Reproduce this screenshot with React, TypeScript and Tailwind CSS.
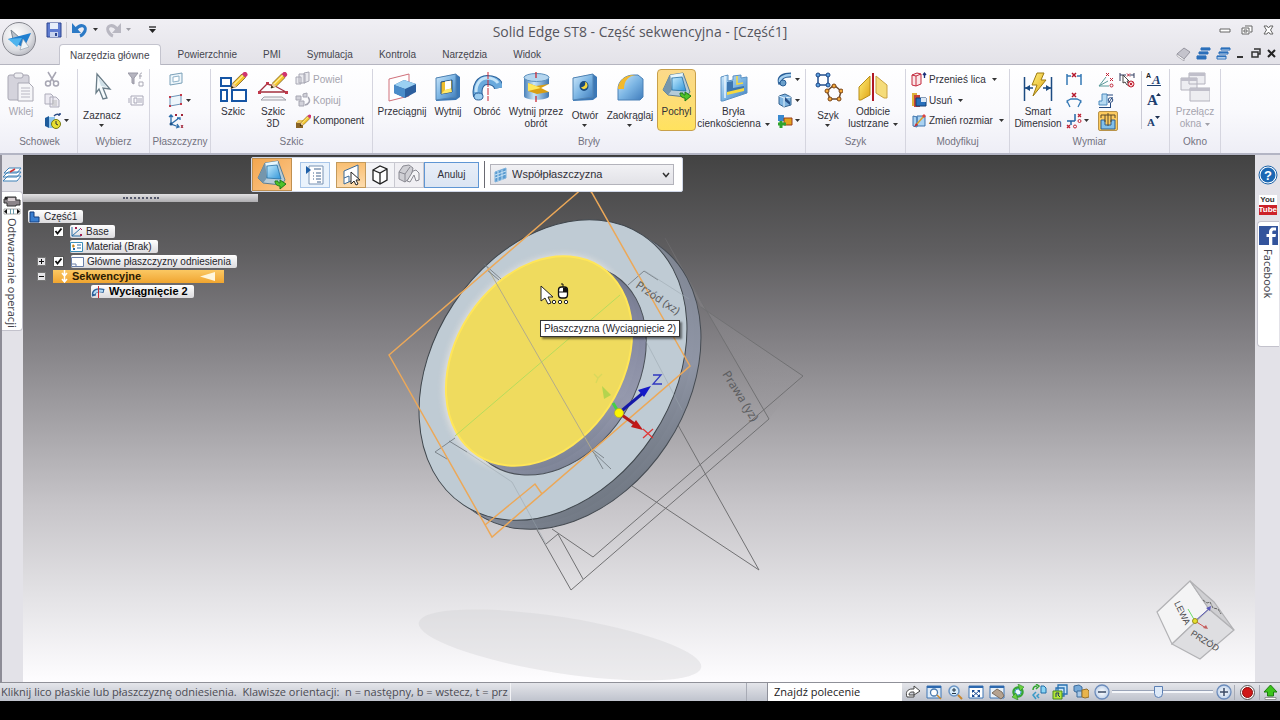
import React from "react";

type Kids = { children?: React.ReactNode };

const Ico = ({ s = 16, w, h, children }: { s?: number; w?: number; h?: number } & Kids) => (
  <svg width={w ?? s} height={h ?? s} viewBox={`0 0 ${w ?? s} ${h ?? s}`} fill="none" aria-hidden="true" className="shrink-0">
    {children}
  </svg>
);

const Caret = ({ dim = false }: { dim?: boolean }) => (
  <svg width="5" height="3" viewBox="0 0 5 3" aria-hidden="true" className="shrink-0">
    <path d="M0 0h5L2.5 3z" fill={dim ? "#a0a0a8" : "#333"} />
  </svg>
);

const Defs = () => (
  <svg width="0" height="0" className="absolute" aria-hidden="true">
    <defs>
      <linearGradient id="blue" x1="0" y1="0" x2="1" y2="1">
        <stop offset="0" stopColor="#cfe9fb" />
        <stop offset="0.5" stopColor="#7db6e4" />
        <stop offset="1" stopColor="#3f7cbc" />
      </linearGradient>
      <linearGradient id="sky" x1="0" y1="0" x2="1" y2="1">
        <stop offset="0" stopColor="#c4ecff" />
        <stop offset="1" stopColor="#2f94d8" />
      </linearGradient>
      <linearGradient id="gold" x1="0" y1="0" x2="1" y2="1">
        <stop offset="0" stopColor="#fff07a" />
        <stop offset="1" stopColor="#e0a416" />
      </linearGradient>
      <linearGradient id="cyl" x1="0" y1="0" x2="1" y2="0">
        <stop offset="0" stopColor="#4a80b8" />
        <stop offset="0.4" stopColor="#c9e6f8" />
        <stop offset="1" stopColor="#3f78b4" />
      </linearGradient>
      <radialGradient id="orb" cx="0.4" cy="0.35" r="0.7">
        <stop offset="0" stopColor="#ffffff" />
        <stop offset="0.7" stopColor="#dcdde2" />
        <stop offset="1" stopColor="#b5b6be" />
      </radialGradient>
      <radialGradient id="zoomknob">
        <stop offset="0" stopColor="#ffffff" />
        <stop offset="1" stopColor="#c0d2ea" />
      </radialGradient>
    </defs>
  </svg>
);

/* ---------- shared icon drawings ---------- */
const Pencil = ({ t = "" }: { t?: string }) => (
  <g transform={t}>
    <path d="M0 16l2-6L12 0l4 4L6 14z" fill="#f2c52e" stroke="#6a4a10" strokeWidth=".8" />
    <path d="M3.5 11.500L13.500 1.500" stroke="#fff3a0" strokeWidth="1.300" />
    <path d="M12 0l1.500-1.500a2.500 2.500 0 0 1 4 4L16 4z" fill="#d0356f" />
    <path d="M0 16l1-3 2 2z" fill="#111" />
    <path d="M1 13l1-3 4 4-3 1z" fill="#e8c9a0" />
  </g>
);

const DraftIcon = () => (
  <Ico s={30}>
    <path d="M8 3l13-2 7 19-4 5-18-2-5-5z" fill="#b5cbd8" stroke="#5c7e94" />
    <path d="M8 3L1 18l5 5 4-5z" fill="#7596ac" />
    <path d="M8 3l13-2-1 5H10z" fill="#e6f6fd" />
    <path d="M10 6l10-1 4 14-14-1z" fill="url(#sky)" stroke="#246ea3" strokeWidth=".8" />
    <path d="M18 21c0 4 3 5 5 5v3l6-5-6-4v3c-2 0-2-1-2-2z" fill="#4fc22a" stroke="#1c7a16" />
  </Ico>
);

const I = {
  paste: (
    <Ico s={30}>
      <rect x="2" y="3" width="21" height="25" rx="2" fill="#d4d3dc" stroke="#a9a8b4" />
      <rect x="8" y="1" width="9" height="5" rx="2" fill="#eeeef2" stroke="#a9a8b4" />
      <path d="M12 11h11l4 4v14H12z" fill="#f5f5f8" stroke="#a9a8b4" />
      <path d="M15 16h9M15 19h9M15 22h9M15 25h9" stroke="#b9b8c3" />
    </Ico>
  ),
  cut: (
    <Ico>
      <path d="M4 1l6 10M12 1L6 11" stroke="#a7a6b3" strokeWidth="1.500" />
      <circle cx="4" cy="12.500" r="2.500" stroke="#a7a6b3" strokeWidth="1.500" />
      <circle cx="12" cy="12.500" r="2.500" stroke="#a7a6b3" strokeWidth="1.500" />
    </Ico>
  ),
  copy: (
    <Ico>
      <path d="M1 2h6l2 2v8H1zM6 5h6l3 3v7H6z" fill="#eceaf2" stroke="#adacba" />
      <path d="M8 9h5M8 11h5M8 13h5" stroke="#bbb" />
    </Ico>
  ),
  clip: (
    <Ico s={18}>
      <path d="M1 6l4-2v12l-4-2z" fill="#1d5b9c" />
      <path d="M5 5h6v11H5z" fill="#8fc6ef" />
      <circle cx="12" cy="12" r="4.500" fill="#e8e033" stroke="#777a10" />
      <path d="M12 9v3l2 1" stroke="#333" />
      <path d="M10 4c2-2 4-2 6-1m0 0V1m0 2h-2" stroke="#2a4a84" strokeWidth="1.500" />
    </Ico>
  ),
  select: (
    <Ico s={30}>
      <path d="M10 2l13 15-7-1 4 10-4 1-4-10-3 4z" fill="#f5fafc" stroke="#6a7d88" strokeWidth="1.300" />
      <path d="M11 5l9 10-6-1z" fill="#cfe0e8" />
    </Ico>
  ),
  filter: (
    <Ico>
      <path d="M0 1h10L6 6v6l-2-1V6z" fill="#b5b4bf" stroke="#9a99a6" />
      <path d="M14 1c-2 0-2 1-2 3v3M11 4h3M11 10h4v4h-4z" stroke="#a9a8b4" />
    </Ico>
  ),
  selbox: (
    <Ico>
      <path d="M3 3h12v9H3zM1 5v5M6 5h3v5H6zM11 5v5M13 5v5" stroke="#a9a8b8" />
    </Ico>
  ),
  plane: (
    <Ico>
      <path d="M2 4l12-2v10L2 14z" fill="#eef6fb" stroke="#7aa0b8" />
      <path d="M5 6l6-1v5l-6 1z" fill="#fff" stroke="#8fb2c8" />
    </Ico>
  ),
  planeRed: (
    <Ico>
      <path d="M2 5l11-2v9L2 14z" fill="#eef6fb" stroke="#6d94b8" />
      <path d="M1 4h2v2H1zM12 2h2v2h-2zM1 13h2v2H1zM12 11h2v2h-2z" fill="#c43a4a" />
    </Ico>
  ),
  axes: (
    <Ico>
      <path d="M3 2v9l8 3M3 11l8-6M1 4l2-2 2 2M9 5h3v2M9 11l2 3-3 1" stroke="#2c6dab" strokeWidth="1.300" />
      <path d="M7 1l2 2m0-2L7 3M13 1l2 2m0-2l-2 2M13 12l2 3m0-3l-2 3" stroke="#a02236" />
      <circle cx="3" cy="11" r="1.500" fill="#1f5287" />
    </Ico>
  ),
  sketch: (
    <Ico s={30}>
      <path d="M3 6h10v8H3zM3 18h6v11H3zM14 18h14v11H14z" fill="#fff" stroke="#1555a5" strokeWidth="2" />
      <Pencil t="translate(13 2) scale(.9)" />
    </Ico>
  ),
  sketch3d: (
    <Ico s={30}>
      <path d="M1 20L9 12l8 2 11 6H1" stroke="#a22f3e" strokeWidth="1.300" />
      <path d="M0 19h3v3H0zM27 19h3v3h-3zM8 10h3v3H8z" fill="#c0384a" />
      <path d="M6 25h18l4 3H3z" fill="#f2f2f5" stroke="#9d9da6" />
      <Pencil t="translate(13 2) scale(.88)" />
    </Ico>
  ),
  dup: (
    <Ico>
      <path d="M1 6h5v7H1zM4 3h6v9H4zM9 2l5-1v9l-5 2z" fill="#e9e9ee" stroke="#a8a8b4" />
    </Ico>
  ),
  cpy3: (
    <Ico>
      <path d="M1 4h5v4H1zM4 9h5v5H4zM8 2l4-1v4H8z" fill="#d2d2da" stroke="#a6a6b2" />
      <path d="M13 5c3 4 1 7-3 8" stroke="#a6a6b2" strokeWidth="1.500" />
    </Ico>
  ),
  comp: (
    <Ico>
      <path d="M1 9h7v6H1z" fill="#8a6425" />
      <path d="M3 7h7l-2 3H1z" fill="#eac765" />
      <Pencil t="translate(5 3) scale(.62)" />
    </Ico>
  ),
  extrude: (
    <Ico s={30}>
      <path d="M2 7L22 2v22L2 29z" fill="#fff" stroke="#d0707a" />
      <path d="M7 13l10-5 12 4v8l-11 6-11-5z" fill="#2c5f9e" />
      <path d="M7 13l10-5 12 4-11 5z" fill="#9bd0f2" />
      <path d="M7 13l11 4v9L7 21z" fill="#4a8cc9" />
    </Ico>
  ),
  cutout: (
    <Ico s={30}>
      <path d="M3 6l20-4 4 3v20l-4 3-20 1z" fill="#3c78b6" />
      <path d="M3 6l20-4v23L3 28z" fill="url(#blue)" stroke="#5184b4" />
      <path d="M8 10l11-2v12L8 22z" fill="#eebd2c" stroke="#1c4c83" />
      <path d="M12 9.500l6-1v8l-6 1.500z" fill="#fff" />
      <path d="M8 22l4-4 6-1.500 1 3.500z" fill="#ffe96a" />
    </Ico>
  ),
  revolve: (
    <Ico s={30}>
      <path d="M6 24C4 14 9 8 15 8c7 0 11 3 12 8" stroke="#2a5f98" strokeWidth="10" />
      <path d="M6 24C4 14 9 8 15 8c7 0 11 3 12 8" stroke="#6aa9dc" strokeWidth="8" />
      <path d="M4 20C4 11 9 6 15 6c6 0 9 2 11 5" stroke="#c5e4f8" strokeWidth="3" />
      <ellipse cx="6.500" cy="24.500" rx="4.500" ry="3.500" fill="#9ccdf0" stroke="#2a5f98" />
      <path d="M16 0v29" stroke="#c92a36" strokeDasharray="7 1" />
    </Ico>
  ),
  revcut: (
    <Ico s={30}>
      <path d="M3 5v19c0 5 25 5 25 0V5z" fill="url(#cyl)" />
      <ellipse cx="15.500" cy="5.500" rx="12.500" ry="4" fill="#b5d6ef" stroke="#5e91bd" />
      <path d="M7 11l8 3 13-2v8l-12 2-9-3z" fill="#d99f14" />
      <path d="M7 11l8 3 5 2-13 3z" fill="#ffe85c" />
      <path d="M28 12l-8 4 8 4z" fill="#fff" />
      <path d="M15 0v6M15 24v6" stroke="#c92a36" strokeWidth="1.300" />
    </Ico>
  ),
  hole: (
    <Ico s={30}>
      <path d="M3 6l20-4 4 3v20l-4 3-20 1z" fill="#3c78b6" />
      <path d="M3 6l20-4v23L3 28z" fill="url(#blue)" stroke="#5184b4" />
      <ellipse cx="14" cy="14" rx="4.500" ry="5" fill="#1b4c80" />
      <path d="M11 15a3.500 4 0 0 0 6.500-1c0-3-1-4-2.500-4 1 3-1 5-4 5z" fill="#f6d63c" />
    </Ico>
  ),
  round: (
    <Ico s={30}>
      <path d="M3 28V17C3 9 10 3 19 3h4l5 4v18l-3 3z" fill="url(#blue)" stroke="#4a80b6" />
      <path d="M3 17C3 9 10 3 19 3h2c-8 1-12 6-12 14z" fill="#f3b92c" />
    </Ico>
  ),
  thin: (
    <Ico s={30}>
      <path d="M2 5l7-2v6l5-1V4l8-1v3l6-1v16L4 29H2z" fill="url(#blue)" stroke="#5c92c4" />
      <path d="M8 10v12l17-4v-4l-11 2V9z" fill="#3c76b0" />
      <path d="M8 20l17-4v3L8 23z" fill="#f6d93f" />
      <path d="M18 4v8l6-1" stroke="#f6d93f" strokeWidth="1.500" />
      <path d="M6 4v22" stroke="#e8f5fc" strokeWidth="1.500" />
    </Ico>
  ),
  sweep: (
    <Ico>
      <path d="M4 13C1 6 7 4 14 4" stroke="#2a5f98" strokeWidth="5" />
      <path d="M3 11C2 7 7 4 14 4" stroke="#a5d0f0" strokeWidth="2.500" />
      <circle cx="6" cy="12" r="3" fill="#6a9fca" stroke="#2a5f98" />
    </Ico>
  ),
  rib: (
    <Ico>
      <path d="M2 4l6-2 6 3v8l-7 2-5-3z" fill="#7fb4e0" stroke="#34628f" />
      <path d="M2 4l5 2v9M7 6l7-1" stroke="#e2f1fb" />
      <path d="M8 5l5 5v3l-5-4z" fill="#274f86" />
    </Ico>
  ),
  union: (
    <Ico>
      <path d="M1 2h6v6H1z" fill="#3989cf" />
      <path d="M7 5h8v7H7z" fill="#e3a21d" stroke="#9a3c1c" />
      <path d="M4 8v7M1 11h8" stroke="#2fa32c" strokeWidth="3" />
    </Ico>
  ),
  pattern: (
    <Ico s={30}>
      <path d="M5 3h10v10H5z" stroke="#27518e" strokeWidth="1.500" />
      <path d="M21 13l7 6-2 8h-9l-3-8z" stroke="#6b4a2c" strokeWidth="1.500" />
      <g fill="#5aa0e0" stroke="#1d4686">
        <circle cx="5" cy="3" r="2" /><circle cx="15" cy="3" r="2" /><circle cx="5" cy="13" r="2" /><circle cx="15" cy="13" r="2" />
      </g>
      <g fill="#f4a93a" stroke="#7b4518">
        <circle cx="21" cy="14" r="2" /><circle cx="28" cy="19" r="2" /><circle cx="26" cy="27" r="2" /><circle cx="17" cy="27" r="2" /><circle cx="14" cy="19" r="2" />
      </g>
    </Ico>
  ),
  mirror: (
    <Ico s={30}>
      <path d="M12 4v19l-9 5H1V15z" fill="url(#gold)" stroke="#b98d18" />
      <path d="M18 4v17l8 5h3V13z" fill="#f5dc7a" stroke="#c9a240" />
      <path d="M15 1v28" stroke="#b01824" strokeWidth="2" />
    </Ico>
  ),
  moveFace: (
    <Ico>
      <path d="M1 4l5-2 4 1v10l-5 2-4-1zM5 5v10M1 4l4 1 5-2" fill="#fbe6e8" stroke="#c3283c" />
      <path d="M13.500 7V2m-1.500 2l1.500-2L15 4" stroke="#1b2f7a" strokeWidth="1.300" />
    </Ico>
  ),
  del: (
    <Ico>
      <path d="M1 1h5v13H1z" fill="#e0b23a" /><path d="M3 3h6v12H3z" fill="#c4443a" />
      <path d="M5 6h10v8H5z" fill="#2870bb" stroke="#123f75" />
      <path d="M10 6h5v4h-5z" fill="#dbe8f6" />
    </Ico>
  ),
  resize: (
    <Ico>
      <path d="M2 3l4 1v10l-4-1zM6 3h8v10H6z" fill="#a9d2f2" stroke="#3f75ad" />
      <path d="M5 12l8-9" stroke="#d7a12a" strokeWidth="1.500" /><path d="M3 14l2-4 2 2z" fill="#c62c39" />
      <path d="M13 1l2 2-2 2-2-2z" fill="#d44" />
    </Ico>
  ),
  smart: (
    <Ico s={30}>
      <path d="M1.500 5v24M28.500 5v24" stroke="#1c4b82" strokeWidth="1.500" />
      <path d="M1 16h9M20 16h9" stroke="#1c4b82" strokeWidth="1.500" />
      <path d="M2 16l5-3v6zM28 16l-5-3v6z" fill="#1c4b82" />
      <path d="M14 1h7l-3 7h5L10 24l4-11H9z" fill="url(#gold)" stroke="#9c7a10" />
    </Ico>
  ),
  dDist: (
    <Ico>
      <path d="M1 3v11M15 3v11M1 5h4M11 5h4" stroke="#3679b5" strokeWidth="1.500" />
      <path d="M6 2l4 4m0-4L6 6" stroke="#b5182c" strokeWidth="1.500" />
    </Ico>
  ),
  dAngle: (
    <Ico>
      <path d="M4 15L1 9l4-2h6l4 2-3 6M2 8l-1 3M14 8l1 3" stroke="#3679b5" strokeWidth="1.300" />
      <path d="M6 1l4 4m0-4L6 5" stroke="#b5182c" strokeWidth="1.500" />
    </Ico>
  ),
  dCoord: (
    <Ico>
      <path d="M1 8h8M9 1v7M5 8v4" stroke="#2465a5" strokeWidth="1.500" />
      <path d="M12 1l3 3m0-3l-3 3M1 12l3 3m0-3l-3 3" stroke="#c02436" strokeWidth="1.300" />
      <circle cx="13.500" cy="8" r="1.500" stroke="#c02436" /><circle cx="9" cy="13.500" r="1.500" stroke="#c02436" />
    </Ico>
  ),
  dAngC: (
    <Ico>
      <path d="M1 14L8 5M1 14l9-5M1 14h10" stroke="#5a9a9a" />
      <path d="M8 1l3 3m0-3L8 4M12 6l3 3m0-3l-3 3" stroke="#c02436" />
      <circle cx="13.500" cy="13.500" r="1.500" stroke="#c02436" />
    </Ico>
  ),
  dSym: (
    <Ico>
      <path d="M4 1h5v9H9v2H1V8h3z" fill="#b7daf2" stroke="#4d8abd" />
      <circle cx="12.500" cy="7" r="2.300" stroke="#24487e" /><path d="M9 2h6M1 14.500h12M14.500 4l-4 6M12.500 10v4" stroke="#24487e" />
    </Ico>
  ),
  dOn: (
    <Ico w={18} h={18}>
      <path d="M2 8h4v5h6V8h4v9H2z" fill="#82c0ea" stroke="#2d5f92" />
      <path d="M2 3h14M2 3v3M16 3v3M6 3v7M12 3v7M9 1v13" stroke="#5c4a2a" />
    </Ico>
  ),
  dAttach: (
    <Ico>
      <path d="M1 1v8M15 1v5M1 3h6M11 3h4" stroke="#333d60" />
      <path d="M4 3l6 6H8l2 4-2 0-2-3-2 1z" fill="#fff" stroke="#444" />
      <path d="M8 1.500l3 3m0-3l-3 3" stroke="#b5182c" />
      <circle cx="12" cy="12" r="3" fill="#fbdcdc" stroke="#c02436" /><path d="M10.500 10.500l3 3m0-3l-3 3" stroke="#c02436" />
    </Ico>
  ),
  windows: (
    <Ico s={30}>
      <g fill="#ededf1" stroke="#b3b2bd">
        <path d="M9 1h16v11H9zM1 6h16v12H1zM10 16h20v13H10z" />
      </g>
      <path d="M9 1h16v3H9zM1 6h16v3H1zM10 16h20v3H10z" fill="#c0bfca" />
    </Ico>
  ),
};

/* ---------- ribbon building blocks ---------- */
const Group = ({ title, cls, children }: { title: string; cls: string } & Kids) => (
  <section aria-label={title} className={`flex shrink-0 flex-col border-r border-[#d5d5df] ${cls}`}>
    <div className="flex h-[62px]">{children}</div>
    <div className="text-center leading-[22px] text-[#73727f]">{title}</div>
  </section>
);

const Big = ({ icon, lines, cls, down, side, dim, on }: { icon: React.ReactNode; lines: string[]; cls: string; down?: boolean; side?: boolean; dim?: boolean; on?: boolean }) => (
  <button
    className={`flex shrink-0 flex-col items-center whitespace-nowrap leading-3 ${cls} ${dim ? "text-[#a5a4ae]" : "text-[#303038]"} ${on ? "rounded-sm border border-[#c8a04a] bg-linear-to-b from-[#fbd98a] to-[#ffe25e] pt-0.5" : "pt-[3px]"}`}
  >
    {icon}
    <span className={`flex flex-col items-center ${down ? "mt-2" : "mt-1"}`}>
      {lines.map((l, i) => (
        <span key={l} className="flex items-center gap-1">
          {l}
          {side && i === lines.length - 1 && <Caret dim={dim} />}
        </span>
      ))}
      {down && <span className="mt-0.5"><Caret /></span>}
    </span>
  </button>
);

const Col = ({ cls = "", children }: { cls?: string } & Kids) => <div className={`flex shrink-0 flex-col ${cls}`}>{children}</div>;

const Small = ({ icon, label, name, caret, dim, on }: { icon: React.ReactNode; label?: string; name?: string; caret?: boolean; dim?: boolean; on?: boolean }) => (
  <button
    aria-label={label ?? name}
    className={`flex items-center gap-0.5 whitespace-nowrap ${dim ? "text-[#a5a4ae]" : "text-[#303038]"} ${on ? "size-5 justify-center rounded-xs border border-[#b9934a] bg-[#fdcb5e]" : "h-[21px]"}`}
  >
    {icon}
    {label}
    {caret && <span className={label ? "ml-1" : ""}><Caret /></span>}
  </button>
);

const Letter = ({ size, mark }: { size: string; mark: string }) => (
  <Ico>
    <text x="1" y="13" fontFamily="Liberation Serif, serif" fontWeight="bold" fontSize={size} fill="#1d3f70">A</text>
    <path d={mark} fill="#1d2f50" />
  </Ico>
);

const TitleBar = () => (
  <header className="relative bg-linear-to-b from-[#f0eff4] to-[#e3e2e8]">
    <button aria-label="Solid Edge" className="absolute top-0.5 left-0">
      <Ico s={36}>
        <circle cx="19" cy="18" r="16.500" fill="url(#orb)" stroke="#85868e" />
        <path d="M11 9l9 8-6 6z" fill="#b8c2cc" stroke="#7c8894" />
        <path d="M8 18l23-6-7 15z" fill="#1f7fd0" />
        <path d="M8 18l14-1-5 9z" fill="#4fb4ee" />
        <path d="M23 18l6 8-9 3z" fill="#eef4f8" stroke="#8b98a5" strokeWidth=".6" />
      </Ico>
    </button>
    <div className="grid h-[25px] grid-cols-[1fr_auto_1fr] items-center">
      <div className="flex items-center gap-1 pb-1 pl-[46px]">
        <button aria-label="Zapisz">
          <Ico>
            <path d="M1 1h14v14H1z" fill="#5f7cd0" stroke="#2c4590" /><path d="M4 1h8v6H4z" fill="#e8eefa" /><path d="M4 10h8v5H4z" fill="#c9d4ee" /><path d="M9 11h2v3H9z" fill="#2c4590" />
          </Ico>
        </button>
        <span className="h-4 w-px bg-[#c9c8d0]" />
        <button aria-label="Cofnij" className="flex items-center gap-1">
          <Ico w={18} h={16}>
            <path d="M5 7c5-6 11-3 9 2-1 2-2 4-5 5" stroke="#2c7ac6" strokeWidth="3" /><path d="M1 1v10h9z" fill="#2c7ac6" />
          </Ico>
          <Caret />
        </button>
        <button aria-label="Ponów" className="ml-0.5 flex items-center gap-1">
          <Ico w={18} h={16}>
            <path d="M13 7C8 1 2 4 4 9c1 2 2 4 5 5" stroke="#b9b8c2" strokeWidth="3" /><path d="M17 1v10H8z" fill="#b9b8c2" />
          </Ico>
          <Caret dim />
        </button>
        <button aria-label="Dostosuj pasek" className="ml-3.5">
          <Ico w={7} h={7}><path d="M0 1h7" stroke="#222" strokeWidth="1.300" /><path d="M0 3h7L3.500 7z" fill="#222" /></Ico>
        </button>
      </div>
      <h1 className="font-['Open_Sans','Noto_Sans',sans-serif] text-[14px] text-[#55555d]">Solid Edge ST8 - Część sekwencyjna - [Część1]</h1>
      <div className="flex items-center justify-end gap-2.5 pr-1.5 pb-1">
        <button aria-label="Minimalizuj okno"><Ico w={12} h={10}><path d="M1 4h10v3H1z" fill="#fff" stroke="#666" /></Ico></button>
        <button aria-label="Przywróć okno"><Ico w={12} h={10}><path d="M4 1h7v6H9M1 3h7v6H1zM3 5h3v2H3z" fill="#fff" stroke="#666" /></Ico></button>
        <button aria-label="Zamknij okno"><Ico w={11} h={10}><path d="M1 1h3l1.500 2L7 1h3L7.500 5 10 9H7L5.500 7 4 9H1l2.500-4z" fill="#fff" stroke="#666" /></Ico></button>
      </div>
    </div>
    <nav className="flex h-[21px] items-stretch border-b border-[#b5b5c0] pl-[59px] text-[#45454e]">
      <button className="-mb-px rounded-t-sm border border-b-0 border-[#c4c4ce] bg-white px-2.5">Narzędzia główne</button>
      <span className="w-1" />
      {["Powierzchnie", "PMI", "Symulacja", "Kontrola", "Narzędzia", "Widok"].map((t) => (
        <button key={t} className="px-[13px]">{t}</button>
      ))}
      <div className="ml-auto flex items-center gap-[5px] pr-1 pb-0.5">
        <button aria-label="Pomoc"><Ico s={15}><path d="M1 8l7-6 6 4-6 7z" fill="#c4c3cc" stroke="#96959f" /><path d="M1 8l7 5v2L1 10z" fill="#fff" stroke="#96959f" strokeWidth=".7" /></Ico></button>
        {[0, 1].map((k) => (
          <button key={k} aria-label={k ? "Kaskada" : "Sąsiadująco"}>
            <Ico s={15}><path d="M5 2h9v2H5zM3 6h9v2H3zM1 10h9v3H1z" fill={k ? "#dbeafa" : "#2b6fba"} stroke="#2b6fba" /><path d="M5 2.500h9M3 6.500h9M1 10.500h9" stroke="#2b6fba" strokeWidth="1.500" /></Ico>
          </button>
        ))}
        <button aria-label="Minimalizuj"><Ico s={9}><path d="M1 7h6v2H1z" fill="#333" /></Ico></button>
        <button aria-label="Przywróć" className="ml-px"><Ico s={10}><path d="M3 1h6v5H7M1 4h6v5H1z" stroke="#333" strokeWidth="1.500" /></Ico></button>
        <button aria-label="Zamknij" className="ml-px"><Ico s={9}><path d="M1 1l7 7m0-7L1 8" stroke="#222" strokeWidth="2" /></Ico></button>
      </div>
    </nav>
  </header>
);

const Ribbon = () => (
  <div className="flex overflow-hidden border-b-2 border-[#b3b5c4] bg-linear-to-b from-white via-[#fafafd] to-[#eeeef6] pt-1 pl-0.5">
    <Group title="Schowek" cls="w-[76px]">
      <Big icon={I.paste} lines={["Wklej"]} cls="w-[38px]" dim />
      <Col cls="pl-1"><Small name="Wytnij" icon={I.cut} /><Small name="Kopiuj" icon={I.copy} /><Small name="Schowek" icon={I.clip} caret /></Col>
    </Group>
    <Group title="Wybierz" cls="w-[72px]">
      <Big icon={I.select} lines={["Zaznacz"]} cls="w-[48px]" down />
      <Col cls="pl-0.5"><Small name="Filtr" icon={I.filter} /><Small name="Ramka" icon={I.selbox} /></Col>
    </Group>
    <Group title="Płaszczyzny" cls="w-[61px]">
      <Col cls="pl-[18px]"><Small name="Współpłaszczyzna" icon={I.plane} /><Small name="Płaszczyzna" icon={I.planeRed} caret /><Small name="Układ współrzędnych" icon={I.axes} /></Col>
    </Group>
    <Group title="Szkic" cls="w-[162px]">
      <Big icon={I.sketch} lines={["Szkic"]} cls="ml-0.5 w-[40px]" />
      <Big icon={I.sketch3d} lines={["Szkic", "3D"]} cls="w-[40px]" />
      <Col cls="pl-0.5"><Small icon={I.dup} label="Powiel" dim /><Small icon={I.cpy3} label="Kopiuj" dim /><Small icon={I.comp} label="Komponent" /></Col>
    </Group>
    <Group title="Bryły" cls="w-[433px]">
      <Big icon={I.extrude} lines={["Przeciągnij"]} cls="ml-1 w-[50px]" />
      <Big icon={I.cutout} lines={["Wytnij"]} cls="w-[42px]" />
      <Big icon={I.revolve} lines={["Obróć"]} cls="w-[36px]" />
      <Big icon={I.revcut} lines={["Wytnij przez", "obrót"]} cls="w-[62px]" />
      <Big icon={I.hole} lines={["Otwór"]} cls="w-[36px]" down />
      <Big icon={I.round} lines={["Zaokrąglaj"]} cls="w-[54px]" down />
      <Big icon={<DraftIcon />} lines={["Pochyl"]} cls="w-[39px]" on />
      <Big icon={I.thin} lines={["Bryła", "cienkościenna"]} cls="w-[75px]" side />
      <Col cls="pl-1.5"><Small name="Przeciąganie" icon={I.sweep} caret /><Small name="Żebro" icon={I.rib} caret /><Small name="Suma" icon={I.union} caret /></Col>
    </Group>
    <Group title="Szyk" cls="w-[100px]">
      <Big icon={I.pattern} lines={["Szyk"]} cls="ml-1 w-[36px]" down />
      <Big icon={I.mirror} lines={["Odbicie", "lustrzane"]} cls="w-[54px]" side />
    </Group>
    <Group title="Modyfikuj" cls="w-[104px]">
      <Col cls="pl-[5px]"><Small icon={I.moveFace} label="Przenieś lica" caret /><Small icon={I.del} label="Usuń" caret /><Small icon={I.resize} label="Zmień rozmiar" caret /></Col>
    </Group>
    <Group title="Wymiar" cls="w-[160px]">
      <Big icon={I.smart} lines={["Smart", "Dimension"]} cls="ml-0.5 w-[52px]" />
      <Col cls="w-[34px] pl-0.5"><Small name="Odległość" icon={I.dDist} /><Small name="Kąt" icon={I.dAngle} /><Small name="Współrzędne" icon={I.dCoord} caret /></Col>
      <Col cls="w-[21px]"><Small name="Współrzędne kątowe" icon={I.dAngC} /><Small name="Średnica symetryczna" icon={I.dSym} /><Small name="Wymiar osi" icon={I.dOn} on /></Col>
      <Col cls="w-[22px]"><Small name="Dołącz wymiar" icon={I.dAttach} /></Col>
      <div className="my-0.5 w-px bg-[#c9c9d4]" />
      <Col cls="pl-1">
        <Small name="Styl tekstu" icon={<Ico><text x="0" y="7" fontFamily="Liberation Sans, sans-serif" fontSize="7" fontWeight="bold" fill="#222">A</text><text x="6" y="13" fontFamily="Liberation Serif, serif" fontSize="13" fontWeight="bold" fontStyle="italic" fill="#1d3f70">A</text><path d="M1 14.500h14" stroke="#1d3f70" /></Ico>} />
        <Small name="Większy tekst" icon={<Letter size="15" mark="M10 4h5l-2.500-3z" />} />
        <Small name="Mniejszy tekst" icon={<Letter size="11" mark="M9 3h5l-2.500 3z" />} />
      </Col>
    </Group>
    <Group title="Okno" cls="w-[51px]">
      <Big icon={I.windows} lines={["Przełącz", "okna"]} cls="w-[50px]" side dim />
    </Group>
  </div>
);

/* ---------- model view ---------- */
const Scene = () => (
  <svg width="1232" height="527" viewBox="23 156 1232 527" className="absolute top-0 left-0" role="img" aria-label="Model części">
    <defs>
      <linearGradient id="rim" gradientUnits="userSpaceOnUse" x1="680" y1="240" x2="540" y2="530">
        <stop offset="0" stopColor="#5d646b" /><stop offset="0.3" stopColor="#7b828e" /><stop offset="0.7" stopColor="#8f95a5" /><stop offset="1" stopColor="#6a727c" />
      </linearGradient>
      <linearGradient id="boss" gradientUnits="userSpaceOnUse" x1="640" y1="280" x2="500" y2="475">
        <stop offset="0" stopColor="#616875" /><stop offset="0.5" stopColor="#8488a0" /><stop offset="0.75" stopColor="#9599ad" /><stop offset="1" stopColor="#70788a" />
      </linearGradient>
      <linearGradient id="fan" gradientUnits="userSpaceOnUse" x1="670" y1="240" x2="780" y2="400">
        <stop offset="0" stopColor="#8c8a8e" /><stop offset="1" stopColor="#9a989c" />
      </linearGradient>
      <filter id="soft" x="-20%" y="-20%" width="140%" height="140%"><feGaussianBlur stdDeviation="3" /></filter>
    </defs>
    <ellipse cx="560" cy="645" rx="143" ry="28" transform="rotate(9 560 645)" fill="#cfced2" opacity=".35" />
    <path d="M665 238l36 69 102 69-34 43z" fill="url(#fan)" opacity=".3" />
    <g stroke="#717173" strokeWidth="1" fill="none">
      <path d="M701 307l102 69-210 181-41-28M769 419L571 590l-34-60M769 419L690 282M546 544l12-10 25 45M632 486l127 84-81-145" />
      <path d="M665 238l25 44" opacity=".4" />
    </g>
    <ellipse cx="567" cy="379" rx="162" ry="119.500" transform="rotate(-56.400 567 379)" fill="url(#rim)" stroke="#454b52" />
    <ellipse cx="560" cy="374.500" rx="162" ry="119.500" transform="rotate(-56.400 560 374.500)" fill="url(#rim)" />
    <ellipse cx="553" cy="370" rx="162" ry="119.500" transform="rotate(-56.400 553 370)" fill="#bfcbd4" stroke="#3f464c" />
    <ellipse cx="539" cy="362" rx="115" ry="86" transform="rotate(-57 539 362)" fill="#efe8e0" filter="url(#soft)" opacity=".8" />
    <ellipse cx="553" cy="370" rx="113" ry="83.500" transform="rotate(-57 553 370)" fill="url(#boss)" stroke="#4a5058" />
    <ellipse cx="546" cy="365.500" rx="113" ry="83.500" transform="rotate(-57 546 365.500)" fill="url(#boss)" />
    <ellipse cx="539" cy="361" rx="112.500" ry="83.500" transform="rotate(-57 539 361)" fill="#efdb5e" stroke="#ffe658" strokeWidth="2" />
    <g fill="none">
      <path d="M455 436l165-141" stroke="#b7db5c" />
      <path d="M487 267l108 188" stroke="#b3ab8a" />
      <path d="M595 455l8 14M484 264l17 15M487 270l12 10M455 438l-20 14 12 7M449 441l18 11M590 449l21 20M592 449l12 9M628 285l16-14 14 9" stroke="#6d747a" opacity=".8" />
      <path d="M645 271l44 28M467 452l45 30 34 62M640 330l42 80" stroke="#98a3ac" opacity=".5" />
    </g>
    <g stroke="#eca858" strokeWidth="1.500" fill="none">
      <path d="M389 355L576 194l10-9 6 8 98 173-198 171z" />
      <path d="M485 525l50-41 7 10" />
    </g>
    <g fontFamily="Noto Sans, sans-serif" fontSize="12" fill="#5c5d60">
      <text x="635" y="287" transform="rotate(34 635 287)" fontSize="11">Przód (xz)</text>
      <text x="722" y="374" transform="rotate(58 722 374)">Prawa (yz)</text>
    </g>
    <g strokeWidth="3">
      <path d="M619 413l24-20" stroke="#1419a8" /><path d="M651 386l-7 11-6-7z" fill="#1419c8" />
      <path d="M619 413l17 12" stroke="#b01c1c" /><path d="M643 430l-12-3 5-7z" fill="#c01818" />
      <path d="M619 413l-6-10" stroke="#45d045" /><path d="M602 386l9 9-7 4z" fill="#b4d44e" />
    </g>
    <circle cx="619" cy="413" r="4.500" fill="#fbf600" stroke="#b8aa20" strokeWidth=".7" />
    <g fill="none" strokeWidth="1.300">
      <path d="M653 375h8l-8 9h9" stroke="#3038c0" />
      <path d="M643 429l10 9m0-9l-10 9" stroke="#e03838" />
      <path d="M594 374l4 4 4-4M598 378l-2 5" stroke="#d8d85c" />
    </g>
    {/* pointer with right mouse button hint */}
    <path d="M541 286v15l4-3 3 6 3-1-3-6h5z" fill="#fff" stroke="#222" strokeWidth="1" />
    <rect x="558.500" y="287" width="9" height="11" rx="3" fill="#fff" stroke="#111" strokeWidth="1.300" />
    <path d="M563 287.500h2.500a1.500 1.500 0 0 1 1.500 1.500v3h-4z" fill="#111" />
    <path d="M559 292h8M563 287v-3h-2" stroke="#111" fill="none" />
    <g fill="#fff" stroke="#222"><circle cx="554" cy="302" r="1.700" /><circle cx="560" cy="302" r="1.700" /><circle cx="566" cy="302" r="1.700" /></g>
    {/* orientation cube */}
    <g stroke="#b2b2b5" strokeWidth="1.200">
      <path d="M1190 581l-33 31 15 32 37-35z" fill="#f4f4f5" />
      <path d="M1172 644l28 15 34-29-25-21z" fill="#dedee1" />
      <path d="M1190 581l24 21 20 28-25-21z" fill="#cfcfd2" />
    </g>
    <path d="M1203 600l4 3 3-1 3 6 5 1 3 5" stroke="#666" strokeDasharray="3 1" fill="none" />
    <g fontFamily="Liberation Sans, sans-serif" fontSize="10" fill="#4b4b4e">
      <text x="1174" y="603" transform="rotate(64 1174 603)" fontSize="9">LEWA</text>
      <text x="1190" y="635" transform="rotate(32 1190 635)" fontSize="9">PRZÓD</text>
    </g>
    <path d="M1195 621l15-13" stroke="#5a5ab8" /><path d="M1195 621l11 7" stroke="#d05050" /><path d="M1195 621l-7-12" stroke="#6cdc6c" />
    <path d="M1211 606l-1 5-4-3z" fill="#5a5ab8" /><path d="M1208 629l-5-1 3-3z" fill="#c06060" />
    <circle cx="1195" cy="621" r="2.500" fill="#e6df2c" stroke="#998f20" />
  </svg>
);

const Tag = ({ children, bold }: { bold?: boolean } & Kids) => (
  <span className={`flex h-[13px] items-center gap-[3px] rounded-xs bg-linear-to-b from-white to-[#dcdbde] pr-1.5 whitespace-nowrap ${bold ? "text-[11px] font-bold text-black" : "text-[#26262c]"}`}>{children}</span>
);

const Check = ({ label }: { label: string }) => (
  <span className="grid">
    <input type="checkbox" defaultChecked aria-label={label} className="size-[11px] appearance-none border border-[#555] bg-white [grid-area:1/1]" />
    <svg width="11" height="11" viewBox="0 0 11 11" className="pointer-events-none [grid-area:1/1]" aria-hidden="true"><path d="M2.500 5l2 2.500 4-5" stroke="#111" strokeWidth="1.800" fill="none" /></svg>
  </span>
);

const Expand = ({ open }: { open?: boolean }) => (
  <button aria-label={open ? "Zwiń" : "Rozwiń"} className="ml-3.5">
    <Ico s={9}><path d="M.500 .500h8v8h-8z" fill="#e6e5e8" stroke="#777" /><path d={open ? "M2 4.500h5" : "M2 4.500h5M4.500 2v5"} stroke="#111" /></Ico>
  </button>
);

const Tree = () => (
  <div className="relative flex flex-col pt-[38px]">
    <div className="flex h-2 w-[235px] items-center justify-center bg-linear-to-b from-[#e2e1e3] to-[#aeadb0]">
      <span className="w-9 border-t-2 border-dotted border-[#55596c]" />
    </div>
    <ul className="mt-[7px] [&>li]:flex [&>li]:h-[15px] [&>li]:items-center">
      <li className="pl-[5px]"><Tag><Ico w={13} h={12}><path d="M2 1h4v5h5v5H2z" fill="#3a7fd0" stroke="#123f80" /></Ico>Część1</Tag></li>
      <li className="gap-1.5 pl-[30px]"><Check label="Base" /><Tag><Ico w={13} h={12}><path d="M2 1v9h9M2 10l8-7" stroke="#2a70a8" /><path d="M5 1l2 2m0-2L5 3M10 8l2 2m0-2l-2 2M10 2l2 2" stroke="#a02050" /></Ico>Base</Tag></li>
      <li className="pl-[47px]"><Tag><Ico w={13} h={12}><path d="M.500 1.500h12v9H.500z" fill="#fff" stroke="#3a8cb8" /><path d="M3 3l2 2-2 2-1-2z" fill="#c8861c" /><path d="M3 7h2v2H3z" fill="#2b6aa0" /><path d="M7 4h4M7 7h4" stroke="#2b6aa0" /></Ico>Materiał (Brak)</Tag></li>
      <li className="gap-[7px]"><Expand /><Check label="Główne płaszczyzny odniesienia" /><Tag><Ico w={13} h={12}><path d="M.500 1.500h12v9H.500z" fill="#fff" stroke="#6a7fa8" /><path d="M1 8h4v2" stroke="#6a7fa8" /></Ico>Główne płaszczyzny odniesienia</Tag></li>
      <li className="gap-[7px]">
        <Expand open />
        <span className="flex h-[13px] w-[171px] items-center gap-1 bg-linear-to-b from-[#fbc862] to-[#f0a52e] px-2 text-[11px] font-bold text-[#2b1c04]">
          <Ico w={7} h={13}><path d="M3.500 0v12M1 3l2.500 3L6 3M1 9l2.500 3L6 9" stroke="#fff" strokeWidth="1.500" /></Ico>
          Sekwencyjne
          <span className="ml-auto"><Ico w={16} h={9}><path d="M0 4.500L15 0v9z" fill="#fff6dc" /></Ico></span>
        </span>
      </li>
      <li className="pl-[68px]"><Tag bold><Ico w={15} h={12}><path d="M3 10C2 5 6 3 13 5" stroke="#2a5f98" strokeWidth="4" /><path d="M3 8c1-3 4-4 9-3" stroke="#b5dcf6" strokeWidth="2" /><path d="M7.500 0v12" stroke="#c92a36" /></Ico>Wyciągnięcie 2</Tag></li>
    </ul>
  </div>
);

const CommandBar = () => (
  <div className="absolute top-px left-[228px] flex h-[35px] items-center rounded-xs border border-[#cfd6e6] bg-white pr-2 text-[10px] text-[#303038]">
    <button aria-label="Pochyl" className="flex h-[33px] w-10 items-center justify-center border border-[#c09050] bg-linear-to-br from-[#f3a64e] to-[#fcc88a]"><DraftIcon /></button>
    <button aria-label="Opcje" className="ml-2 flex h-[26px] w-[30px] items-center justify-center border border-[#a9c6e8] bg-[#eaf3fc]">
      <Ico s={20}><path d="M4 1h14v18H4z" fill="#fff" stroke="#7893b4" /><path d="M1 1l5 4-5 4z" fill="#1d5fa8" /><path d="M9 4h7M8 8h1M11 8h5M8 11h1M11 11h5M8 14h1M11 14h5M12 17h4" stroke="#43648e" /></Ico>
    </button>
    <div className="ml-1.5 flex">
      <button aria-label="Wybierz płaszczyznę" className="flex h-[26px] w-[30px] items-center justify-center border border-[#c39a5c] bg-linear-to-b from-[#f9bf72] to-[#fddcae]">
        <Ico s={22}><path d="M4 7l14-6v13L4 20zM4 14l5-2v6" fill="#fff" stroke="#3a6a98" /><path d="M11 8v12l3-3 2 4 2-1-2-4h4z" fill="#fff" stroke="#222" /></Ico>
      </button>
      <button aria-label="Bryła" className="flex h-[26px] w-[29px] items-center justify-center border border-l-0 border-[#c8c8d0] bg-[#f4f4f7]">
        <Ico s={20}><path d="M3 5l7-4 7 3v11l-7 4-7-4zM3 5l7 3 7-4M10 8v11" fill="#fff" stroke="#222" strokeWidth="1.300" /></Ico>
      </button>
      <button aria-label="Łańcuch" className="flex h-[26px] w-[29px] items-center justify-center border border-l-0 border-[#c8c8d0] bg-[#f0eff3]">
        <Ico s={22}><path d="M1 8l4-6 6-1 4 3-2 9-6 5-6-3z" fill="#cfcfd4" stroke="#8a8a92" /><path d="M1 8l6 2v8M7 10l5-7" stroke="#8a8a92" /><path d="M9 17l6-10 3-1 3 3v7l-3 1-2-6-4 7z" fill="#f4f4f6" stroke="#8a8a92" /></Ico>
      </button>
      <button className="h-[26px] w-[55px] border border-[#5f96d4] bg-linear-to-b from-[#e8eef8] to-[#dbe5f3]">Anuluj</button>
    </div>
    <span className="mx-[5px] h-[27px] w-px bg-[#6a6a72]" />
    <div className="grid h-[21px] items-center">
      <select aria-label="Typ płaszczyzny" className="h-[21px] w-[184px] appearance-none border border-[#b3b3bb] bg-linear-to-b from-[#f1f1f4] to-[#e2e2e7] pl-[21px] text-[11px] [grid-area:1/1]">
        <option>Współpłaszczyzna</option>
      </select>
      <span className="pointer-events-none flex items-center justify-between px-1 [grid-area:1/1]">
        <Ico w={13} h={16}><path d="M1 5l11-4v10L1 15z" fill="#5b9bd0" stroke="#7fb2dc" /><path d="M1 8l11-4M1 11l11-4M4 4v10M8 3v10" stroke="#c4e0f4" /></Ico>
        <Ico w={8} h={6}><path d="M1 1l3 3.500L7 1" stroke="#333" strokeWidth="1.500" /></Ico>
      </span>
    </div>
  </div>
);

const LeftRail = () => (
  <aside className="ml-0.5 flex w-[21px] shrink-0 flex-col items-center bg-[#e3e2e8] pt-3">
    <button aria-label="Biblioteka"><Ico w={19} h={16}><path d="M0 14l5-5 13 0-4 5zM0 10l5-5h13l-4 5zM1 6l5-5h12l-4 5z" fill="#fff" stroke="#3f82b8" /><path d="M7 5l5-3" stroke="#c33" strokeWidth="1.500" /></Ico></button>
    <button className="mt-2 flex h-[140px] w-full flex-col items-center rounded-r-sm border border-l-0 border-[#c3c2cc] bg-white pt-1">
      <Ico w={18} h={20}><path d="M1 3h3V1h9v3h4v5h-4v1H4V7H1z" fill="#8b8489" stroke="#333" /><path d="M5 2h7v3H5z" fill="#d8cfd2" /><circle cx="3" cy="2" r="1.500" fill="#222" /><path d="M1 13h16v5H1z" fill="#fff" stroke="#aaa" /><path d="M4 13v5l-3-2.500zM14 13v5l3-2.500z" fill="#111" /><path d="M7.500 13v5M10.500 13v5" stroke="#69a" /></Ico>
      <span className="mt-0.5 font-['Noto_Sans',sans-serif] text-[11px] leading-3 text-[#44444c] [writing-mode:vertical-rl]">Odtwarzanie operacji</span>
    </button>
  </aside>
);

const RightRail = () => (
  <aside className="flex w-[25px] shrink-0 flex-col items-center bg-[#e3e2e8] pt-2.5">
    <button aria-label="Pomoc"><Ico s={20}><circle cx="10" cy="10" r="9" fill="#fff" stroke="#1a62a8" /><circle cx="10" cy="10" r="7.500" fill="#1c68b4" /><text x="10" y="14.500" textAnchor="middle" fontFamily="Liberation Sans, sans-serif" fontWeight="bold" fontSize="13" fill="#fff">?</text></Ico></button>
    <a href="#youtube" aria-label="YouTube" className="mt-2.5 flex w-[18px] flex-col text-center text-[8px] leading-[10px] font-bold">
      <span className="bg-white text-[#333]">You</span>
      <span className="bg-[#cc2229] text-white">Tube</span>
    </a>
    <a href="#facebook" className="mt-1.5 flex h-[126px] w-[22px] flex-col items-center rounded-l-sm border border-r-0 border-[#c3c2cc] bg-white pt-1">
      <Ico s={19}><path d="M0 0h19v19H0z" fill="#33549c" /><path d="M10 19v-8H7.500V8H10V6c0-3 2-4.500 4-4.500h3v3h-2c-1.200 0-1.700.5-1.700 1.500v2H17l-.5 3h-3.200v8z" fill="#fff" /></Ico>
      <span className="mt-1 font-['Noto_Sans',sans-serif] text-[11px] leading-3 text-[#44444c] [writing-mode:vertical-rl]">Facebook</span>
    </a>
  </aside>
);

const Knob = ({ plus }: { plus?: boolean }) => (
  <Ico s={16}><circle cx="8" cy="8" r="7" fill="url(#zoomknob)" stroke="#6c8cbc" strokeWidth="1.300" /><path d={plus ? "M4 8h8M8 4v8" : "M4 8h8"} stroke="#3a4a66" strokeWidth="1.500" /></Ico>
);

const viewTools: [string, React.ReactNode][] = [
  ["Powtórz", <path key="p" d="M2 13c-2-5 1-8 5-8h2V2l6 5-6 4V8H7c-2 0-3 1-3 3h5v2z" fill="#fff" stroke="#444" />],
  ["Powiększ obszar", <g key="p"><path d="M1 2h14v12H1z" fill="#dceaf8" stroke="#3c74b4" /><path d="M1 2h14v2H1z" fill="#2d68ae" /><circle cx="8" cy="8.500" r="3.500" fill="#fff" stroke="#4a7ab0" strokeWidth="1.300" /><path d="M11 11l4 4" stroke="#c8862c" strokeWidth="1.500" /></g>],
  ["Powiększ", <g key="p"><circle cx="7" cy="7" r="5" fill="#d8ecfa" stroke="#6a94c4" strokeWidth="1.500" /><path d="M5 6h4M7 4v4M5 9.500h4" stroke="#234" /><path d="M11 11l4 4" stroke="#c8862c" strokeWidth="2" /></g>],
  ["Dopasuj", <g key="p"><path d="M1 2h14v12H1z" fill="#fff" stroke="#3c74b4" /><path d="M1 2h14v2H1z" fill="#2d68ae" /><path d="M4 6h3L4 9zM12 6H9l3 3zM4 13h3l-3-3zM12 13H9l3-3z" fill="#1c4c94" /><path d="M5 7l6 5m0-5l-6 5" stroke="#1c4c94" /></g>],
  ["Przesuń", <g key="p"><path d="M1 2h14v12H1z" fill="#e8f0f8" stroke="#3c74b4" /><path d="M1 2h14v2H1z" fill="#2d68ae" /><path d="M3 9l5-4 5 3 2 4-3 3-3-2-3-2z" fill="#b5a290" stroke="#7b6d60" /></g>],
  ["Obróć widok", <g key="p"><circle cx="8" cy="8" r="4.500" fill="#d4f0ff" stroke="#35a534" strokeWidth="2.500" /><circle cx="8" cy="8" r="3" fill="#e8f8ff" stroke="#4a9cd0" /><path d="M8 0l6 3-4 4zM8 16l-6-3 4-4z" fill="#6cd040" stroke="#2a8a2a" strokeWidth=".6" /></g>],
  ["Widoki", <g key="p"><path d="M10 2h3l2 2v5h-5z" fill="#8cd4f4" stroke="#1c6ca8" /><path d="M2 6c0-3 1-4 4-4M5 0l3 2-3 3" stroke="#2fa32c" strokeWidth="1.500" /><path d="M5 8l-3 3 3 4M8 10l-2 2 2 2" stroke="#3a9ac8" strokeWidth="1.500" /></g>],
  ["Style widoku", <g key="p"><path d="M6 1h9v9H6zM4 4h8v8H4z" fill="#c8e4f8" stroke="#2870b0" strokeWidth="1.300" /><path d="M1 7h9v8H1z" fill="#b4e838" stroke="#4a8c1c" /><path d="M4 9v4M4 9h3l-1 2 2 2" stroke="#236" /></g>],
  ["Wygląd", <g key="p"><path d="M1 2l5-1 3 2v5l-4 1-4-2z" fill="#76a9d8" stroke="#3c6c9c" /><path d="M4 7h5v6H4z" fill="#a9c9e8" stroke="#3c6c9c" /><path d="M9 6l5-1 2 2v6l-4 1-3-1z" fill="#e8b44c" stroke="#96702c" /></g>],
];

const StatusBar = () => (
  <footer className="flex h-[19px] items-center border-t border-[#8f9098] bg-linear-to-b from-[#e4e5ea] to-[#bfc3cd]">
    <p className="min-w-0 truncate pl-px font-['Open_Sans','Noto_Sans',sans-serif] text-[11px] whitespace-pre text-[#4b4b53]">Kliknij lico płaskie lub płaszczyznę odniesienia.  Klawisze orientacji:  n = następny, b = wstecz, t = prz</p>
    <span className="ml-0.5 h-full w-px shrink-0 bg-[#f2f3f6]" />
    <div className="ml-auto flex h-full shrink-0 items-center">
      <span className="mr-[20px] h-full w-px bg-[#a8abb5]" />
      <input aria-label="Znajdź polecenie" defaultValue="Znajdź polecenie" className="h-full w-[135px] border-l border-[#8e909a] bg-white pb-0.5 pl-1.5 font-['Open_Sans','Noto_Sans',sans-serif] text-[11px] text-[#222]" />
      {viewTools.map(([n, d]) => (
        <button key={n} aria-label={n} className="flex w-[21px] justify-center"><Ico>{d}</Ico></button>
      ))}
      <button aria-label="Pomniejsz widok" className="flex w-[21px] justify-center"><Knob /></button>
      <input
        type="range"
        aria-label="Skala widoku"
        defaultValue={46}
        className="h-3 w-[101px] appearance-none bg-transparent [&::-webkit-slider-runnable-track]:h-0.5 [&::-webkit-slider-runnable-track]:bg-[#f4f6fa] [&::-webkit-slider-runnable-track]:shadow-[0_-1px_0_#9aa4b8] [&::-webkit-slider-thumb]:-mt-[5px] [&::-webkit-slider-thumb]:h-3 [&::-webkit-slider-thumb]:w-[9px] [&::-webkit-slider-thumb]:appearance-none [&::-webkit-slider-thumb]:rounded-b-full [&::-webkit-slider-thumb]:border [&::-webkit-slider-thumb]:border-[#5b7fb4] [&::-webkit-slider-thumb]:bg-[#dde9f8]"
      />
      <button aria-label="Powiększ widok" className="flex w-[21px] justify-center"><Knob plus /></button>
      <button aria-label="Nagrywaj" className="flex w-[25px] justify-center border-l border-[#a8abb5]"><Ico s={15}><circle cx="7.500" cy="7.500" r="7" fill="#fff" stroke="#555" /><circle cx="7.500" cy="7.500" r="5" fill="#d01818" stroke="#8c0c0c" /></Ico></button>
      <button aria-label="Wyślij" className="flex w-[21px] justify-center border-l border-[#a8abb5]"><Ico s={15}><path d="M7.500 0L14 7h-3.500v4h-6V7H1z" fill="#3cc41c" stroke="#1d7c10" /><path d="M2 12.500h11v2H2z" fill="#fff" stroke="#777" strokeWidth=".7" /></Ico></button>
    </div>
  </footer>
);

export default function App() {
  return (
    <div className="flex min-h-screen flex-col overflow-hidden bg-black py-[19px] font-['Liberation_Sans',Arial,sans-serif] text-[10px]">
      <Defs />
      <TitleBar />
      <Ribbon />
      <div className="flex flex-1 bg-[#8d8c96]">
        <LeftRail />
        <main className="relative min-w-0 flex-1 overflow-hidden border-t border-[#3a3a3a] bg-[linear-gradient(to_bottom,#434343_0%,#5f5e60_18%,#7e7c80_33%,#a3a1a5_50%,#c6c4c8_66%,#e4e3e6_84%,#fefdff_100%)]">
          <Scene />
          <Tree />
          <CommandBar />
          <div role="tooltip" className="absolute top-[164px] left-[517px] border border-[#333] bg-white px-[3px] text-[10px] leading-[15px] whitespace-nowrap text-[#26262c] shadow-[2px_2px_2px_rgba(0,0,0,0.5)]">Płaszczyzna (Wyciągnięcie 2)</div>
        </main>
        <RightRail />
      </div>
      <StatusBar />
    </div>
  );
}
